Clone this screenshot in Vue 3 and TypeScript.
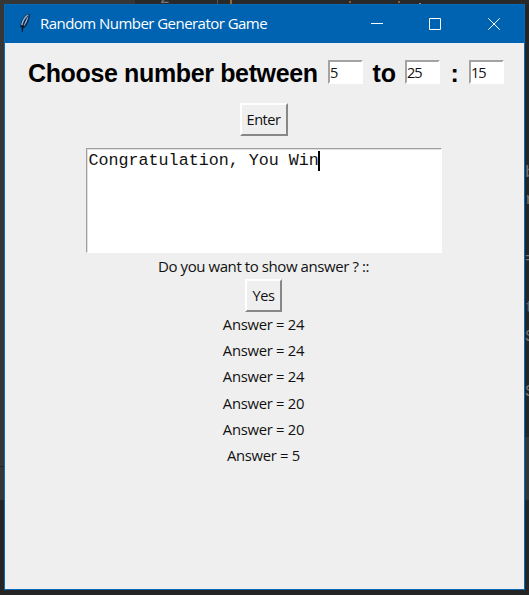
<script setup lang="ts">
import { ref } from 'vue'

const low = ref('5')
const high = ref('25')
const guess = ref('15')
const message = ref('Congratulation, You Win')
const answers = ref<number[]>([24, 24, 24, 20, 20, 5])
const fragments = [
  { text: '2', x: 160, y: -10, color: '#77787a' },
  { text: 'f', x: 227, y: -9, color: '#c07a3c' },
  { text: 'b', x: 525, y: 164, color: '#77787a' },
  { text: 'r', x: 525, y: 191, color: '#77787a' },
  { text: '=', x: 525, y: 250, color: '#77787a' },
  { text: 't', x: 525, y: 299, color: '#5d6972' },
  { text: 'S', x: 525, y: 328, color: '#77756b' },
  { text: 'S', x: 525, y: 383, color: '#77756b' },
]
</script>

<template>
  <div class="desktop">
    <div class="backdrop" aria-hidden="true">
      <i class="pane left"></i>
      <i class="pane top"></i>
      <i class="pane rule"></i>
      <i class="pane right"></i>
      <i class="pane seam"></i>
      <i class="speck s1"></i><i class="speck s2"></i><i class="speck s3"></i>
      <span v-for="(f, i) in fragments" :key="i" class="fragment" :style="{ left: f.x + 'px', top: f.y + 'px', color: f.color }">{{ f.text }}</span>
    </div>
    <main class="window">
      <header class="titlebar">
        <svg class="feather" width="12" height="20" viewBox="0 0 12 20">
          <path d="M10.4 .8C6.2 1.2 2.8 5.8 1.7 11.2L1.2 14 2.6 14.8 3 18.8 4 18.6 4 15.2C6.5 14.5 8 12.7 8.7 9.8L9.8 8.6 9.4 7.5C10.8 5.2 11 3.3 10.4.8Z" fill="#10233a" />
          <path d="M9.4 2C6.1 3.8 3.7 7.4 2.8 12M8.8 3.5C7.8 7.2 6.4 10.5 4.7 12.6" fill="none" stroke="#87b3e2" stroke-width="1.5" />
          <path d="M9.2 2.5C6.7 6 4 11 3.3 18.5" fill="none" stroke="#0b1420" stroke-width=".8" />
        </svg>
        <span class="title">Random Number Generator Game</span>
        <nav class="controls">
          <button aria-label="Minimize"><svg width="12" height="12"><path d="M0 5.5H12" /></svg></button>
          <button aria-label="Maximize"><svg width="12" height="12"><path d="M.5.5H11.5V11.5H.5Z" /></svg></button>
          <button aria-label="Close"><svg width="12" height="12"><path d="M.3.3 11.7 11.7M11.7.3.3 11.7" /></svg></button>
        </nav>
      </header>
      <section class="content">
        <div class="range">
          <span class="big choose">Choose number between</span>
          <input v-model="low" class="entry e1" aria-label="Low" />
          <span class="big to">to</span>
          <input v-model="high" class="entry e2" aria-label="High" />
          <span class="big colon">:</span>
          <input v-model="guess" class="entry e3" aria-label="Guess" />
        </div>
        <button class="push enter">Enter</button>
        <div class="output">{{ message }}<span class="caret"></span></div>
        <div class="question">Do you want to show answer ? ::</div>
        <button class="push yes">Yes</button>
        <div class="answers">
          <div v-for="(a, i) in answers" :key="i" class="answer">Answer = {{ a }}</div>
        </div>
      </section>
    </main>
  </div>
</template>

<style>
body { margin: 0; overflow: hidden; }
</style>

<style scoped>
* { box-sizing: border-box; }
.desktop { position: relative; width: 529px; height: 595px; padding: 4px; background: #252525; overflow: hidden; }
.backdrop { position: absolute; inset: 0; overflow: hidden; }
.pane, .speck { position: absolute; }
.left { left: 0; top: 0; width: 135px; height: 500px; background: #353637; }
.top { left: 135px; top: 0; width: 394px; height: 4px; background: #292929; }
.rule { left: 217px; top: 0; width: 1px; height: 4px; background: #555; }
.right { left: 525px; top: 437px; width: 4px; height: 63px; background: #343434; }
.seam { left: 0; top: 466px; width: 4px; height: 1px; background: #252525; }
.speck { top: 1px; width: 2px; height: 2px; background: #865c3b; }
.s1 { left: 349px; }
.s2 { left: 398px; }
.s3 { left: 419px; top: 3px; height: 1px; background: #888; }
.fragment { position: absolute; font: 16px/18px "Liberation Mono", monospace; }
.window { position: relative; width: 521px; height: 586px; border: 1px solid #0869b5; background: #efefef; display: flex; flex-direction: column; }
.titlebar { height: 38px; flex: none; display: flex; align-items: center; padding-left: 14px; background: #0063b1; color: #fff; }
.feather { margin-top: -2px; }
.title { margin: -2px 0 0 9px; font: 15px/20px "Open Sans", sans-serif; letter-spacing: -.54px; white-space: pre; }
.controls { margin-left: auto; margin-right: 1px; display: flex; }
.controls button { width: 58.5px; height: 38px; padding: 0; border: 0; background: none; display: grid; place-items: center; }
.controls svg { fill: none; stroke: #fff; stroke-width: 1; }
.content { display: flex; flex-direction: column; align-items: center; flex: 1; padding-right: 2px; color: #111; font: 14.8px/20px "Open Sans", sans-serif; }
.range { width: 100%; height: 60px; padding: 17px 0 0 23px; display: flex; align-items: flex-start; }
.big { flex: none; margin-top: -1px; color: #000; font: bold 25px/28px "Liberation Sans", sans-serif; white-space: pre; }
.choose { width: 300px; letter-spacing: -.36px; }
.to { width: 32px; }
.to, .colon { text-indent: -.6px; }
.colon { width: 18px; }
.entry { flex: none; width: 35px; height: 24px; padding: 0 0 1px; border: 2px solid; border-color: #a3a3a3 #fff #fff #a3a3a3; background: #fff; color: #111; font: 14.6px/19px "Open Sans", sans-serif; letter-spacing: -1px; outline: 0; }
.e1 { margin-right: 10px; }
.e2 { margin-right: 11px; }
.push { flex: none; height: 33px; padding: 0 0 2px; border: 2px solid; border-color: #fff #888 #888 #fff; background: #efefef; color: #111; font: 14.6px/20px "Open Sans", sans-serif; letter-spacing: -.5px; white-space: pre; }
.enter { width: 48px; }
.output { flex: none; width: 356px; height: 105px; margin: 12px 0 3px; padding: 2px 2px 1px; border: 1px solid; border-color: #a0a0a0 #fff #fff #a0a0a0; box-shadow: inset 1px 1px #e0e0e0; background: #fff; color: #111; font: 16.7px/20px "Liberation Mono", monospace; white-space: pre; display: flex; align-items: flex-start; }
.caret { width: 2px; height: 20px; background: #000; margin-left: -1px; }
.question { height: 23px; letter-spacing: -.42px; white-space: pre; font-size: 15px; }
.yes { width: 37px; }
.answers { display: flex; flex-direction: column; align-items: center; }
.answer { height: 26.2px; line-height: 25px; letter-spacing: -.28px; white-space: pre; }
</style>
